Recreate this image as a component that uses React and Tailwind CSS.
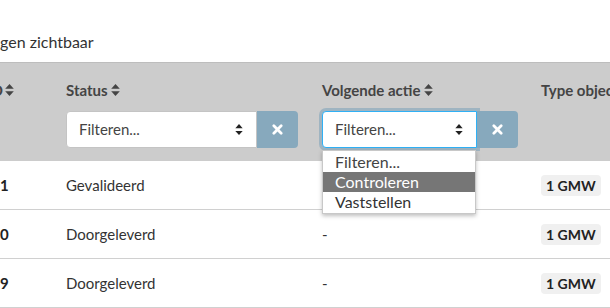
import React from "react";

const font = { fontFamily: "Lato, 'Open Sans', sans-serif" };

function SortIcon({ className = "" }) {
  return (
    <svg viewBox="0 0 10 14" className={`w-[9px] h-[12px] ${className}`} fill="currentColor">
      <path d="M5 0 L10 5.5 H0 Z" />
      <path d="M5 14 L10 8.5 H0 Z" />
    </svg>
  );
}

function SelectArrow() {
  return (
    <svg viewBox="0 0 8 12" className="w-[8px] h-[11px] text-[#222]" fill="currentColor">
      <path d="M4 0 L8 4.5 H0 Z" />
      <path d="M4 12 L8 7.5 H0 Z" />
    </svg>
  );
}

function CloseIcon() {
  return (
    <svg viewBox="0 0 12 12" className="w-[11px] h-[11px]" stroke="white" strokeWidth="3" strokeLinecap="round">
      <path d="M2 2 L10 10 M10 2 L2 10" />
    </svg>
  );
}

function FilterSelect({ focused, width }) {
  return (
    <div className="flex h-[37px]">
      <div
        className={`${width} h-full bg-white rounded-l-[4px] flex items-center justify-between pl-[12px] pr-[13px] text-[15px] text-[#444] ${
          focused
            ? "border border-[#2fb0f5] shadow-[0_0_0_3px_#9fb4c1]"
            : "border border-[#c4c4c4]"
        }`}
      >
        <span>Filteren...</span>
        <SelectArrow />
      </div>
      <div className="w-[41px] h-full bg-[#87a9bd] rounded-r-[4px] flex items-center justify-center">
        <CloseIcon />
      </div>
    </div>
  );
}

const rows = [
  { id: "1", status: "Gevalideerd", actie: "" },
  { id: "0", status: "Doorgeleverd", actie: "-" },
  { id: "9", status: "Doorgeleverd", actie: "-" },
];

export default function App() {
  return (
    <div className="w-[610px] h-[308px] overflow-hidden bg-white text-[#222]" style={font}>
      <div className="h-[62px] flex items-end pb-[8px] text-[16px] text-[#333]">
        <div className="w-[14px] overflow-hidden flex justify-end shrink-0" />
        <span className="-ml-[14px] whitespace-nowrap">gen zichtbaar</span>
      </div>

      {/* HEADER */}
      <div className="bg-[#cccccc] border-t border-[#bdbdbd] h-[99px] grid grid-cols-[66px_256px_219px_1fr] pt-[15px]">
        <div className="flex">
          <div className="w-[14px] overflow-hidden flex justify-end items-start h-[24px]">
            <div className="flex items-center gap-[2px] whitespace-nowrap font-bold text-[15px] text-[#444] h-[24px]">
              <span>ID</span>
              <SortIcon />
            </div>
          </div>
        </div>
        <div className="flex flex-col gap-[9px]">
          <div className="flex items-center gap-[3px] h-[24px] font-bold text-[15px] text-[#444]">
            <span>Status</span>
            <SortIcon />
          </div>
          <FilterSelect width="w-[191px]" />
        </div>
        <div className="flex flex-col gap-[9px] relative">
          <div className="flex items-center gap-[3px] h-[24px] font-bold text-[15px] text-[#444]">
            <span>Volgende actie</span>
            <SortIcon />
          </div>
          <FilterSelect focused width="w-[155px]" />
          {/* open dropdown */}
          <div className="absolute left-0 top-[72px] w-[154px] bg-white border border-[#c8c8c8] shadow-[0_2px_4px_rgba(0,0,0,0.25)] z-10 text-[16px] leading-[20px] py-[1px]">
            <div className="pl-[12px] h-[20px] text-[#444]">Filteren...</div>
            <div className="pl-[12px] h-[20px] bg-[#767676] text-white">Controleren</div>
            <div className="pl-[12px] h-[20px] text-[#333]">Vaststellen</div>
          </div>
        </div>
        <div className="flex items-start h-[24px] whitespace-nowrap font-bold text-[15px] text-[#444]">
          <span className="leading-[24px]">Type object</span>
        </div>
      </div>

      {/* ROWS */}
      {rows.map((r, i) => (
        <div
          key={i}
          className="grid grid-cols-[66px_256px_219px_1fr] h-[49px] border-b border-[#d0d0d0] items-center text-[15px]"
        >
          <div className="font-bold text-[#222]">{r.id}</div>
          <div className="text-[#333]">{r.status}</div>
          <div className="text-[#333]">{r.actie}</div>
          <div>
            <span className="inline-flex items-center h-[21px] px-[5px] rounded-[4px] bg-[#f0f0f0] font-bold text-[14px] text-[#222] whitespace-nowrap">
              1 GMW
            </span>
          </div>
        </div>
      ))}
    </div>
  );
}
